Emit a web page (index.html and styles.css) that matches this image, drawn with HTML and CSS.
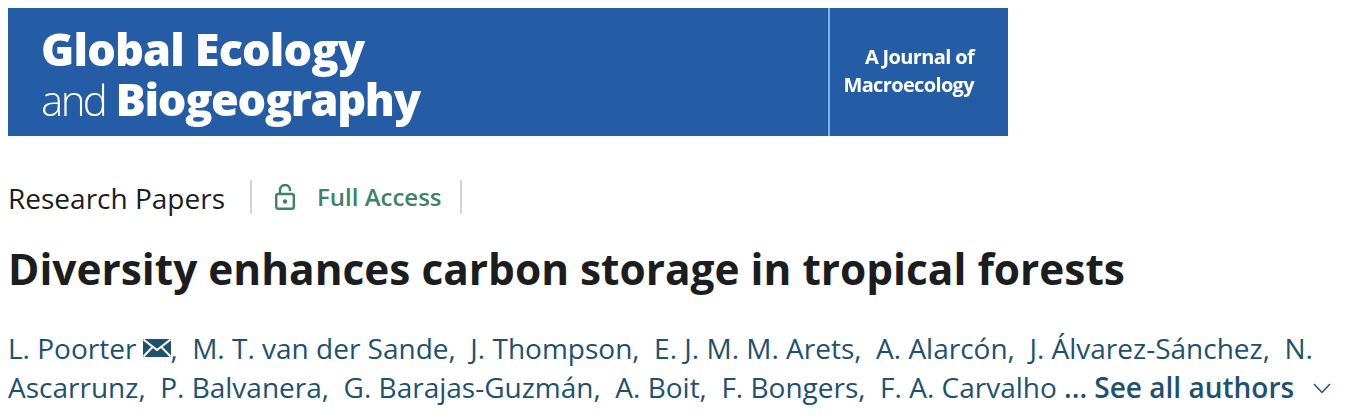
FILE: index.html
```html
<!DOCTYPE html>
<html lang="en">
<head>
<meta charset="utf-8">
<title>Diversity enhances carbon storage in tropical forests</title>
<link rel="stylesheet" href="styles.css">
</head>
<body>
<header class="banner">
  <div class="banner-title">
    <div class="banner-line banner-line-1">Global Ecology</div>
    <div class="banner-line banner-line-2"><span class="light">and</span> Biogeography</div>
  </div>
  <div class="banner-sub">A Journal of<br>Macroecology</div>
</header>
<div class="meta">
  <span class="type">Research Papers</span>
  <span class="access">
    <svg class="lock" viewBox="0 0 20 26" width="20" height="26" aria-hidden="true">
      <path d="M5 10V6a5 5 0 0 1 10 0V7" fill="none" stroke="#3b8566" stroke-width="2.4"/>
      <rect x="1.2" y="10" width="17.6" height="14.8" rx="2" fill="none" stroke="#3b8566" stroke-width="2.4"/>
      <circle cx="10" cy="17.5" r="2.2" fill="#3b8566"/>
    </svg>
    <span class="access-text">Full Access</span>
  </span>
</div>
<h1 class="title">Diversity enhances carbon storage in tropical forests</h1>
<p class="authors">L. Poorter<svg class="mail" viewBox="0 0 28 18" width="28" height="18" aria-hidden="true"><rect width="28" height="18" fill="#1e5170"/><path d="M0.5 0.5L14 11L27.5 0.5M0.5 17.5L10 7.5M27.5 17.5L18 7.5" fill="none" stroke="#fff" stroke-width="2"/></svg>,&nbsp; M. T. van der Sande,&nbsp; J. Thompson,&nbsp; E. J. M. M. Arets,&nbsp; A. Alarcón,&nbsp; J. Álvarez-Sánchez,&nbsp; N. Ascarrunz,&nbsp; P. Balvanera,&nbsp; G. Barajas-Guzmán,&nbsp; A. Boit,&nbsp; F. Bongers,&nbsp; F. A. Carvalho <strong>... See all authors</strong><svg class="chev" viewBox="0 0 18 11" width="18" height="11" aria-hidden="true"><path d="M1 1L9 9.5L17 1" fill="none" stroke="#1e5170" stroke-width="1.5"/></svg></p>
</body>
</html>
```
FILE: styles.css
```css
html, body { margin: 0; padding: 0; background: #fff; }
body {
  padding: 8px 0 0 8px;
  width: 1338px;
  font-family: "Open Sans", "Liberation Sans", sans-serif;
  color: #1c1d1e;
  overflow: hidden;
}
.banner {
  width: 1000px;
  height: 128px;
  background: #245ca6;
  display: flex;
  color: #fff;
}
.banner-title {
  width: 822px;
  box-sizing: border-box;
  padding: 16px 0 0 33px;
  border-right: 2px solid #7fb2e8;
  filter: blur(0.6px);
  font-weight: 800;
}
.banner-line { font-size: 45px; line-height: 50px; letter-spacing: -0.85px; }
.banner-line-2 { letter-spacing: -1.35px; }
.light { font-size: 42px; font-weight: 300; letter-spacing: -2.6px; }
.banner-sub {
  flex: 1;
  padding: 35px 34px 0 0;
  text-align: right;
  font-size: 20px;
  line-height: 28px;
  font-weight: 700;
  letter-spacing: -0.65px;
  filter: blur(0.6px);
}
.meta {
  display: flex;
  align-items: center;
  height: 34px;
  margin-top: 44px;
}
.type { font-size: 28px; padding: 2px 25px 0 0; border-right: 2px solid #d4d4d4; line-height: 32px; }
.access {
  display: flex;
  align-items: center;
  gap: 22px;
  padding: 0 18px 0 23px;
  border-right: 2px solid #d4d4d4;
  height: 34px;
}
.lock { display: block; }
.access-text { color: #3b8566; font-size: 24px; font-weight: 600; margin-top: -2px; }
.title {
  margin: 27px 0 0;
  font-size: 42.4px;
  line-height: 56px;
  font-weight: 700;
}
.authors {
  margin: 32px 0 0;
  font-size: 28px;
  line-height: 39px;
  color: #1e5170;
}
.mail { margin: 0 -1px 2px 7px; }
.authors strong { font-weight: 600; }
.chev { margin: 0 0 4px 19px; }
```
